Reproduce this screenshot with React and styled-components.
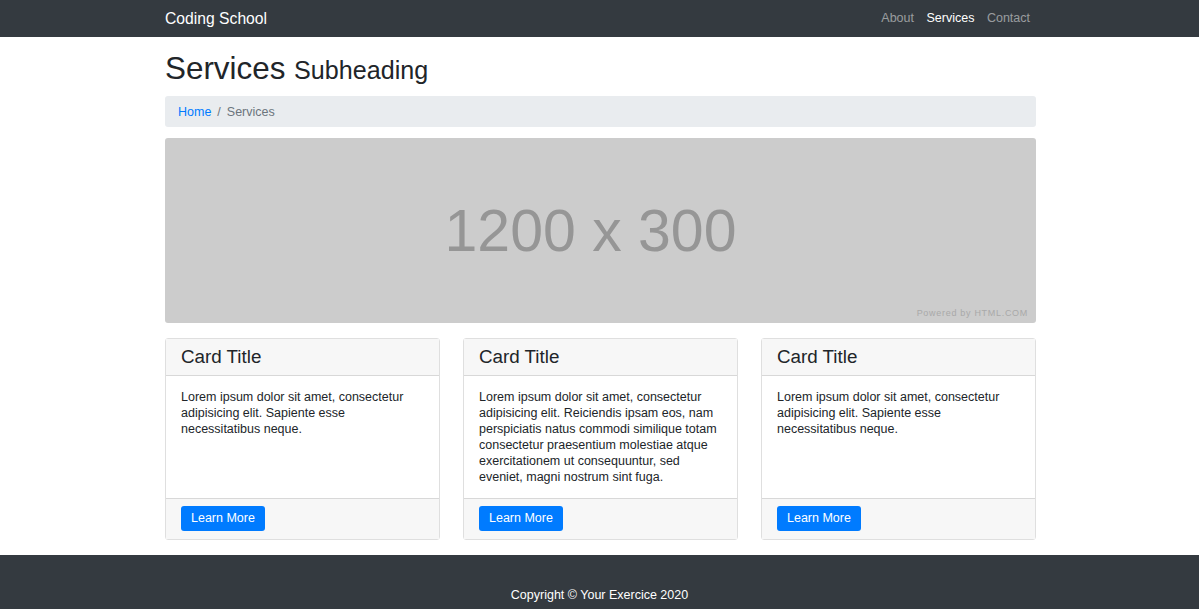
import React from 'react';
import styled, { createGlobalStyle } from 'styled-components';

const GlobalStyle = createGlobalStyle`
  * { box-sizing: border-box; }
  body {
    margin: 0;
    font-family: "Liberation Sans", Arial, Helvetica, sans-serif;
    font-size: 12.5px;
    line-height: 1.5;
    color: #212529;
    background: #fff;
  }
`;

const NavBar = styled.nav`
  background: #343a40;
  height: 37px;
`;

const Container = styled.div`
  width: 871px;
  margin-left: calc((100% - 869px) / 2);
`;

const NavInner = styled(Container)`
  height: 100%;
  display: flex;
  align-items: center;
  justify-content: space-between;
`;

const Brand = styled.a`
  color: #fff;
  font-size: 15.7px;
  text-decoration: none;
`;

const NavLinks = styled.ul`
  display: flex;
  list-style: none;
  margin: 0;
  padding: 0;
  margin-right: 6px;
  gap: 12.5px;
`;

const NavLink = styled.a`
  font-size: 12.5px;
  color: ${p => (p.$active ? '#fff' : 'rgba(255,255,255,0.5)')};
  text-decoration: none;
`;

const Heading = styled.h1`
  font-size: 31.4px;
  font-weight: 400;
  line-height: 1.2;
  margin: 13px 0 8px;
`;

const Small = styled.small`
  font-size: 80%;
`;

const Breadcrumb = styled.ol`
  display: flex;
  list-style: none;
  margin: 0 0 11px;
  padding: 7px 13px 5px;
  height: 31px;
  align-items: center;
  background: #e9ecef;
  border-radius: 3px;

  li + li::before {
    content: '/';
    color: #6c757d;
    padding: 0 6px;
  }
`;

const Crumb = styled.li`
  color: ${p => (p.$active ? '#6c757d' : '#007bff')};
`;

const Placeholder = styled.div`
  position: relative;
  height: 185px;
  background: #cccccc;
  border-radius: 3px;
  display: flex;
  align-items: center;
  justify-content: center;
`;

const PlaceholderText = styled.span`
  font-size: 59px;
  line-height: 1;
  color: #969696;
  margin: 2px 20px 0 0;
`;

const Powered = styled.span`
  position: absolute;
  right: 8px;
  bottom: 2px;
  font-size: 9px;
  letter-spacing: 0.7px;
  color: #a9a9a9;
`;

const CardRow = styled.div`
  display: grid;
  grid-template-columns: repeat(3, 1fr);
  gap: 23px;
  margin: 15px 0 15px;
`;

const Card = styled.div`
  display: flex;
  flex-direction: column;
  border: 1px solid rgba(0, 0, 0, 0.125);
  border-radius: 3px;
  height: 202px;
`;

const CardHeader = styled.div`
  background: #f7f7f7;
  border-bottom: 1px solid rgba(0, 0, 0, 0.125);
  height: 37px;
  padding: 0 15px;
  display: flex;
  align-items: center;
`;

const CardTitle = styled.h4`
  margin: 0;
  font-size: 18.8px;
  font-weight: 400;
`;

const CardBody = styled.div`
  flex: 1;
  padding: 13px 15px 11px;
`;

const CardText = styled.p`
  margin: 0;
  line-height: 16px;
  font-size: 12.5px;
`;

const CardFooter = styled.div`
  background: #f7f7f7;
  border-top: 1px solid rgba(0, 0, 0, 0.125);
  padding: 7px 15px 8px;
`;

const Button = styled.a`
  display: inline-flex;
  align-items: center;
  height: 25px;
  padding: 0 10px;
  background: #007bff;
  color: #fff;
  border-radius: 3px;
  font-size: 12.5px;
  text-decoration: none;
`;

const Footer = styled.footer`
  background: #343a40;
  padding: 31px 0 40px;
  text-align: center;
  color: #fff;
  font-size: 12.5px;
`;

const cards = [
  'Lorem ipsum dolor sit amet, consectetur adipisicing elit. Sapiente esse necessitatibus neque.',
  'Lorem ipsum dolor sit amet, consectetur adipisicing elit. Reiciendis ipsam eos, nam perspiciatis natus commodi similique totam consectetur praesentium molestiae atque exercitationem ut consequuntur, sed eveniet, magni nostrum sint fuga.',
  'Lorem ipsum dolor sit amet, consectetur adipisicing elit. Sapiente esse necessitatibus neque.',
];

export default function App() {
  return (
    <>
      <GlobalStyle />
      <NavBar>
        <NavInner>
          <Brand href="#">Coding School</Brand>
          <NavLinks>
            <li><NavLink href="#">About</NavLink></li>
            <li><NavLink href="#" $active>Services</NavLink></li>
            <li><NavLink href="#">Contact</NavLink></li>
          </NavLinks>
        </NavInner>
      </NavBar>
      <Container>
        <Heading>
          Services <Small>Subheading</Small>
        </Heading>
        <Breadcrumb>
          <Crumb>Home</Crumb>
          <Crumb $active>Services</Crumb>
        </Breadcrumb>
        <Placeholder>
          <PlaceholderText>1200 x 300</PlaceholderText>
          <Powered>Powered by HTML.COM</Powered>
        </Placeholder>
        <CardRow>
          {cards.map((text, i) => (
            <Card key={i}>
              <CardHeader>
                <CardTitle>Card Title</CardTitle>
              </CardHeader>
              <CardBody>
                <CardText>{text}</CardText>
              </CardBody>
              <CardFooter>
                <Button href="#">Learn More</Button>
              </CardFooter>
            </Card>
          ))}
        </CardRow>
      </Container>
      <Footer>Copyright © Your Exercice 2020</Footer>
    </>
  );
}
